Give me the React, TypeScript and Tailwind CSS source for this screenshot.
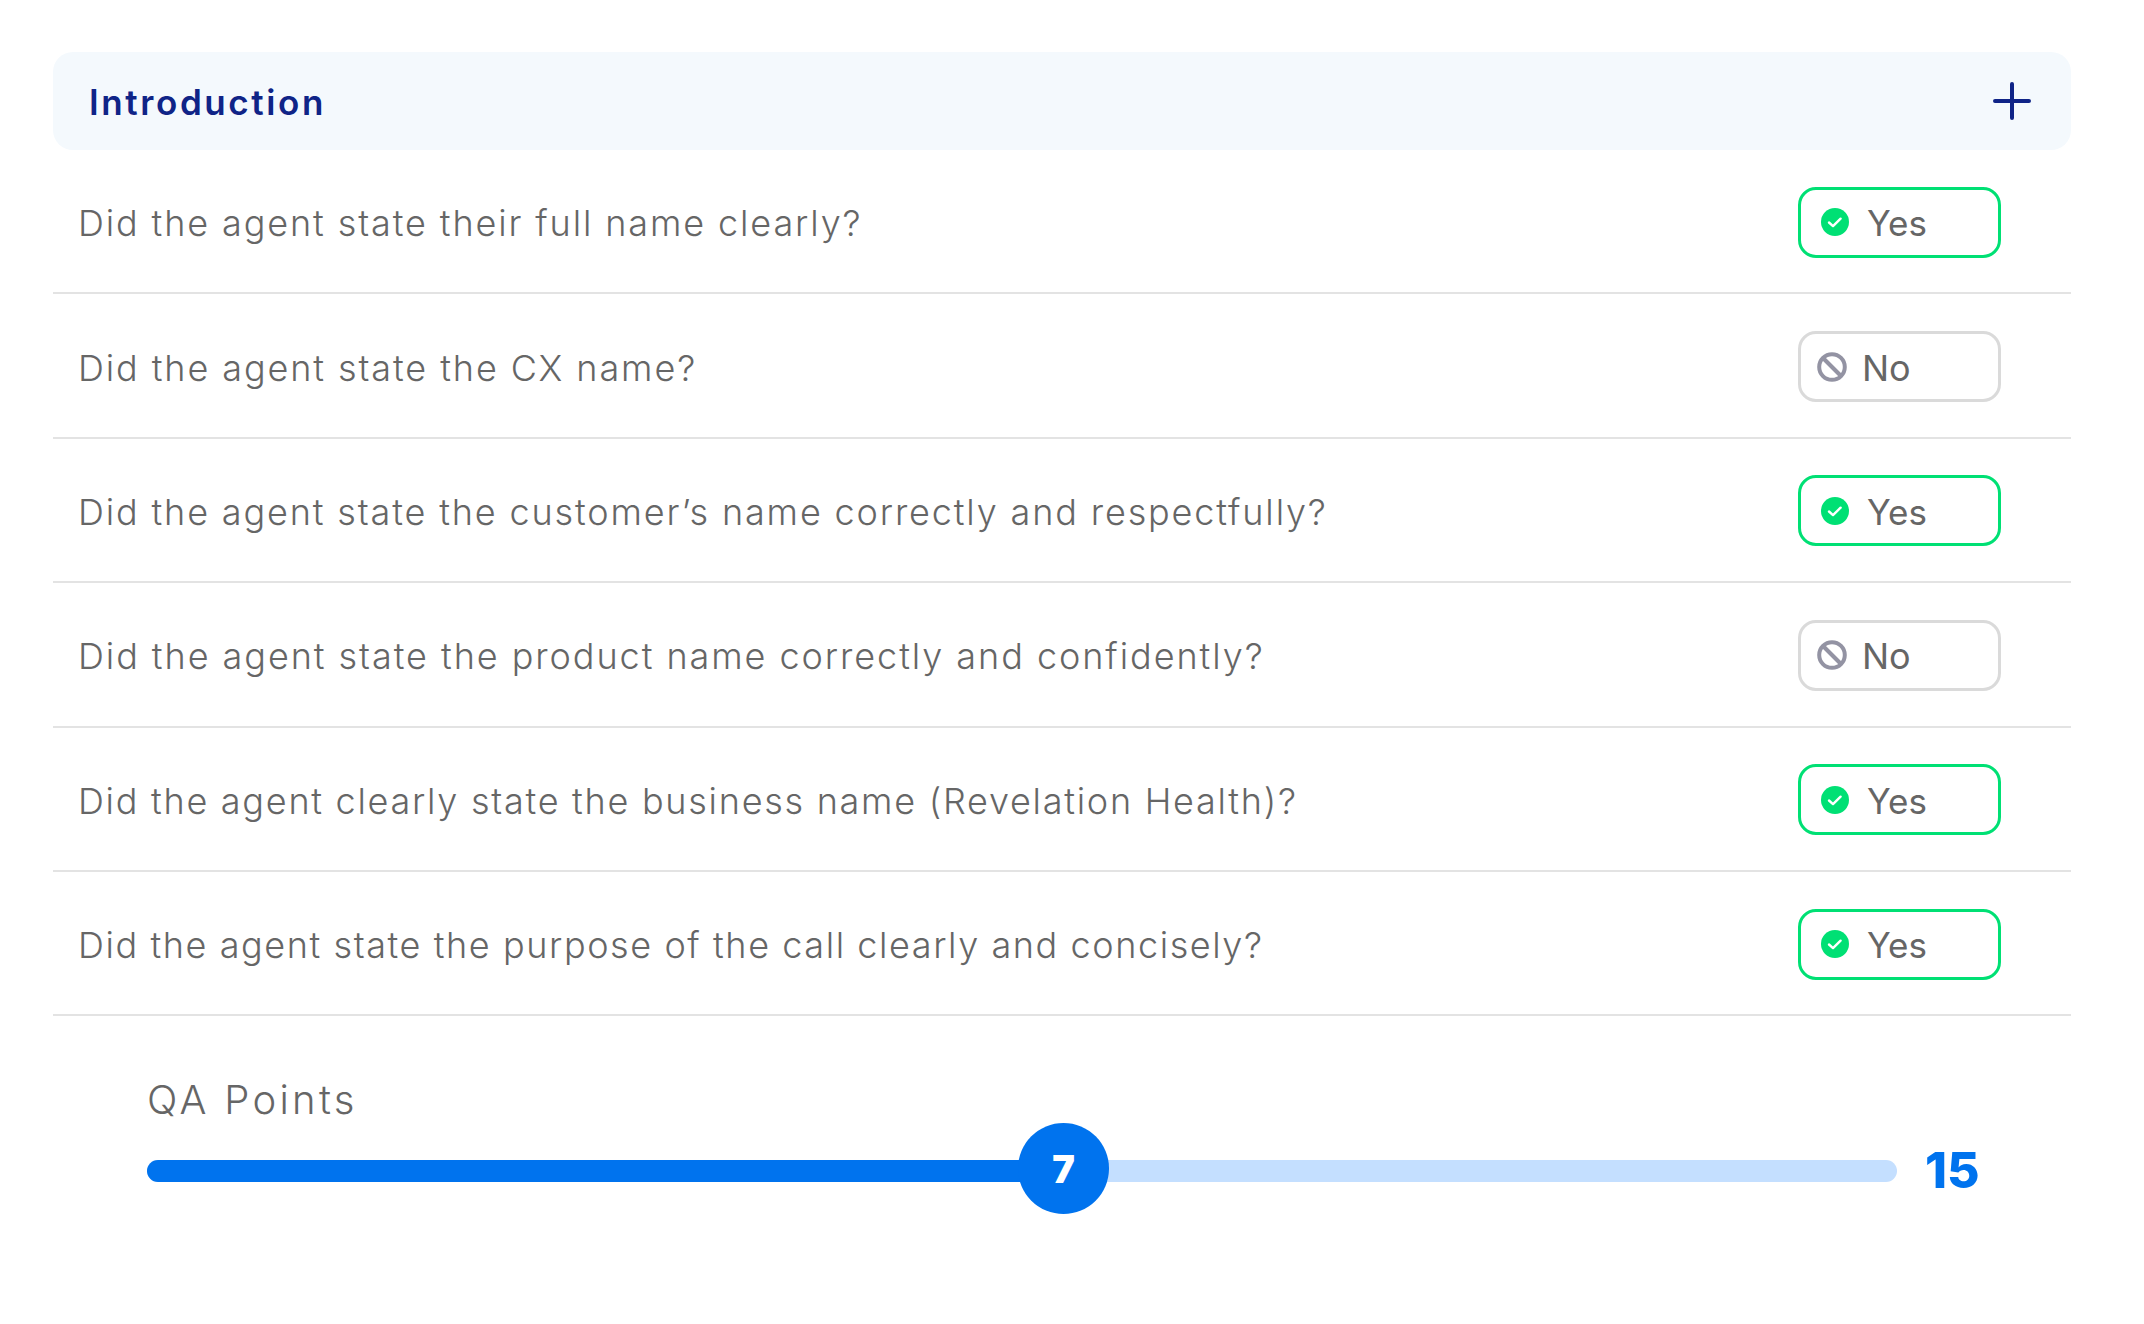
import React from "react";

const questions: { text: string; answer: "Yes" | "No"; tracking: string }[] = [
  { text: "Did the agent state their full name clearly?", answer: "Yes", tracking: "tracking-[1.88px]" },
  { text: "Did the agent state the CX name?", answer: "No", tracking: "tracking-[1.9px]" },
  { text: "Did the agent state the customer’s name correctly and respectfully?", answer: "Yes", tracking: "tracking-[1.85px]" },
  { text: "Did the agent state the product name correctly and confidently?", answer: "No", tracking: "tracking-[1.94px]" },
  { text: "Did the agent clearly state the business name (Revelation Health)?", answer: "Yes", tracking: "tracking-[1.73px]" },
  { text: "Did the agent state the purpose of the call clearly and concisely?", answer: "Yes", tracking: "tracking-[1.58px]" },
];

const YesIcon = () => (
  <svg width="28" height="28" viewBox="0 0 28 28" className="shrink-0">
    <circle cx="14" cy="14" r="14" fill="#00E074" />
    <path d="M8 14.5l4 3.6 7.6-7.4" fill="none" stroke="#fff" strokeWidth="2.4" strokeLinecap="round" strokeLinejoin="round" />
  </svg>
);

const NoIcon = () => (
  <svg width="30" height="30" viewBox="0 0 30 30" className="shrink-0">
    <circle cx="15" cy="15" r="12.8" fill="none" stroke="#9393A3" strokeWidth="4" />
    <path d="M6 6l18 18" fill="none" stroke="#9393A3" strokeWidth="4" />
  </svg>
);

const Badge = ({ answer }: { answer: "Yes" | "No" }) =>
  answer === "Yes" ? (
    <div className="mr-[70px] flex h-[71px] w-[203px] items-center gap-[18px] rounded-[18px] border-[3px] border-[#00E074] pl-[20px] text-[35px] text-[#666666]">
      <YesIcon />
      <span className="pt-[2px]">Yes</span>
    </div>
  ) : (
    <div className="mr-[70px] flex h-[71px] w-[203px] items-center gap-[15px] rounded-[18px] border-[3px] border-[#DADADA] pl-[16px] text-[36px] text-[#666666]">
      <NoIcon />
      <span className="pt-[2px]">No</span>
    </div>
  );

export default function App() {
  return (
    <div className="h-[1324px] w-[2144px] bg-white pl-[53px] pr-[73px] pt-[52px] font-['Inter',sans-serif]">
      {/* Header */}
      <div className="flex h-[98px] items-center justify-between rounded-[20px] bg-[#F4F9FD] pl-[36px] pr-[40px]">
        <h2 className="pt-[2px] text-[35px] font-semibold tracking-[2.6px] text-[#0F2487]">Introduction</h2>
        <svg width="38" height="38" viewBox="0 0 38 38">
          <path d="M19 2v34M2 19h34" fill="none" stroke="#0F2487" strokeWidth="4" strokeLinecap="round" />
        </svg>
      </div>

      {/* Questions */}
      {questions.map((q) => (
        <div key={q.text} className="flex h-[144.4px] items-center justify-between border-b-2 border-[#E3E3E3] pl-[25px] pt-[2px]">
          <p className={`pt-[2px] text-[36px] font-light text-[#666666] ${q.tracking}`}>{q.text}</p>
          <Badge answer={q.answer} />
        </div>
      ))}

      {/* QA Points */}
      <div className="pl-[94px] pt-[54px]">
        <p className="text-[40px] font-light tracking-[3.3px] text-[#666666]">QA Points</p>
        <div className="mt-[3px] flex items-center">
          <div className="relative h-[22px] w-[1750px] rounded-full bg-[#C4DFFF]">
            <div className="h-full w-[900px] rounded-full bg-[#0073EE]" />
            <div className="absolute left-[871px] top-[-37px] flex h-[91px] w-[91px] items-center justify-center rounded-full bg-[#0073EE] pt-[3px] text-[38px] font-black text-white">
              7
            </div>
          </div>
          <span className="ml-[28px] text-[50px] font-extrabold text-[#0073EE]">15</span>
        </div>
      </div>
    </div>
  );
}
